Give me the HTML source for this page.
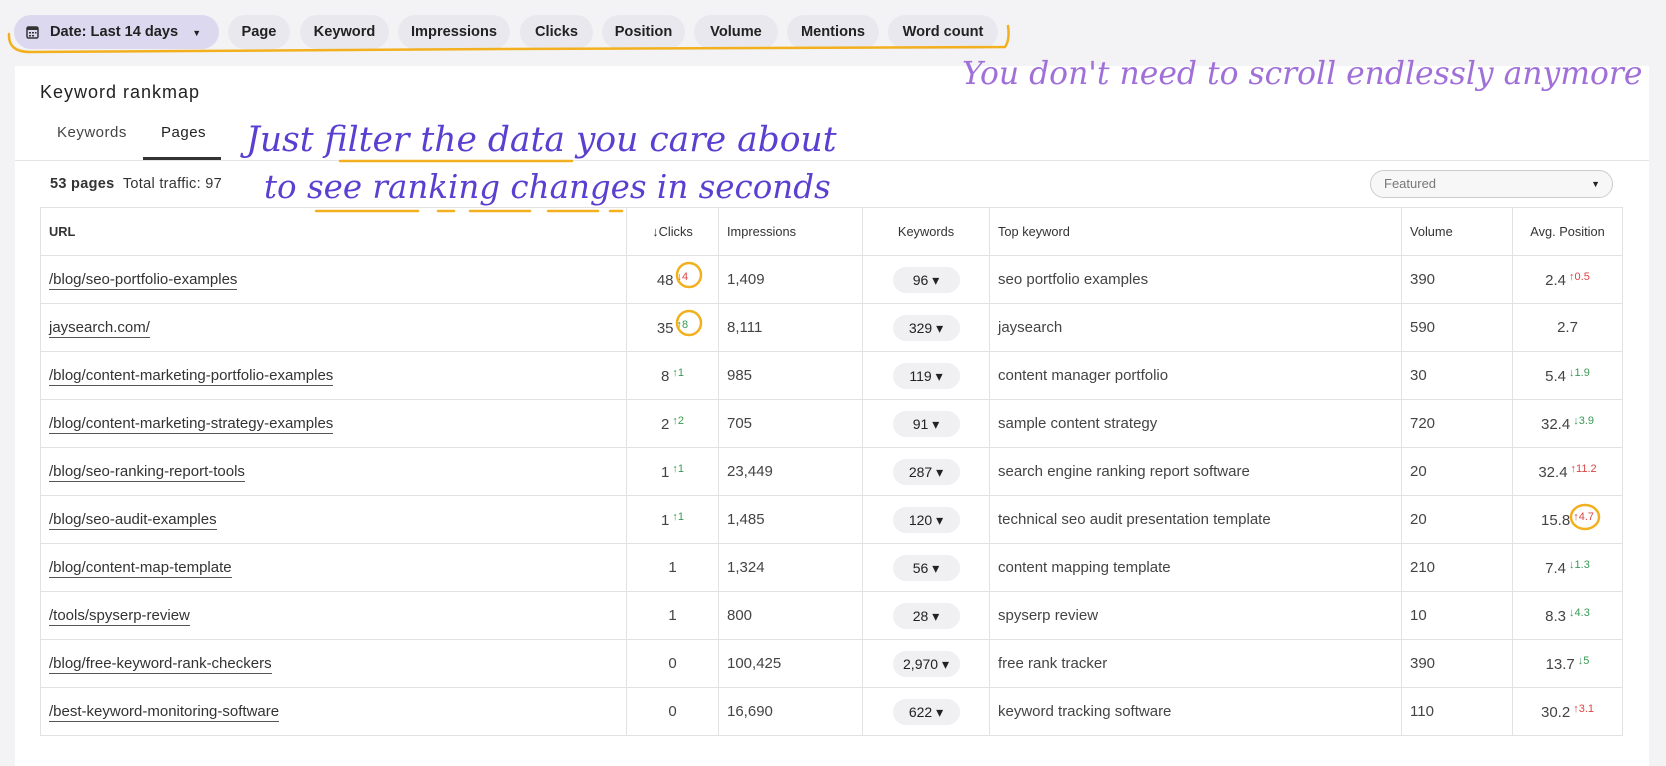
<!DOCTYPE html>
<html><head><meta charset="utf-8">
<style>
*{margin:0;padding:0;box-sizing:border-box}
body{width:1666px;height:756px;background:#f3f3f6;font-family:"Liberation Sans",sans-serif;color:#333;position:relative;overflow:hidden}
.chip{position:absolute;top:15px;height:34px;border-radius:17px;background:#e9e8ef;font-weight:bold;font-size:14.6px;line-height:34px;text-align:center;color:#222}
.card{position:absolute;left:15px;top:66px;width:1634px;height:700px;background:#fff}
.a{position:absolute;white-space:nowrap}
table{position:absolute;left:40px;top:207px;border-collapse:collapse;font-size:15px;color:#444}
td,th{border:1px solid #e2e2e2;height:48px;padding:0 8px;font-weight:normal}
th{height:48px;font-size:12.8px;color:#333}
td a{color:#333;text-decoration:none;border-bottom:1px solid #555;padding-bottom:1px}
.pill{display:inline-block;background:#f0f0f3;border-radius:13px;height:26px;line-height:26px;width:67px;text-align:center;color:#222;font-size:14px}
.up{color:#d44;font-size:11px;vertical-align:5px;margin-left:3px}
.dn{color:#3a9a55;font-size:11px;vertical-align:5px;margin-left:3px}
.hand{font-family:"DejaVu Serif",serif;font-style:italic;position:absolute;white-space:nowrap}
</style></head><body>
<div class="chip" style="left:14px;width:205px;background:#dcd8ef;text-align:left;padding-left:36px">Date: Last 14 days <span style="font-size:9px;margin-left:10px">▼</span>
<svg style="position:absolute;left:12px;top:10px" width="13" height="14" viewBox="0 0 13 14"><rect x="1" y="2" width="11" height="11" rx="1.5" fill="none" stroke="#333" stroke-width="1.5"/><rect x="1" y="2" width="11" height="3" fill="#333"/><g fill="#333"><rect x="3" y="7" width="2" height="1.5"/><rect x="6" y="7" width="2" height="1.5"/><rect x="9" y="7" width="1.5" height="1.5"/><rect x="3" y="10" width="2" height="1.5"/><rect x="6" y="10" width="2" height="1.5"/></g></svg></div>
<div class="chip" style="left:228px;width:62px">Page</div>
<div class="chip" style="left:300px;width:89px">Keyword</div>
<div class="chip" style="left:398px;width:112px">Impressions</div>
<div class="chip" style="left:520px;width:73px">Clicks</div>
<div class="chip" style="left:602px;width:83px">Position</div>
<div class="chip" style="left:694px;width:84px">Volume</div>
<div class="chip" style="left:787px;width:92px">Mentions</div>
<div class="chip" style="left:888px;width:110px">Word count</div>
<div class="card"></div>
<div class="a" style="left:40px;top:82px;font-size:18px;letter-spacing:1px;color:#222">Keyword rankmap</div>
<div class="a" style="left:57px;top:124px;font-size:15px;letter-spacing:.5px;color:#444">Keywords</div>
<div class="a" style="left:161px;top:124px;font-size:15px;letter-spacing:.5px;color:#222">Pages</div>
<div class="a" style="left:143px;top:157px;width:78px;height:3px;background:#333"></div>
<div class="a" style="left:15px;top:160px;width:1634px;height:1px;background:#e4e4e4"></div>
<div class="a" style="left:50px;top:176px;font-size:14.5px;letter-spacing:.3px;color:#333"><b>53 pages</b>&nbsp; Total traffic: 97</div>
<div class="a" style="left:1370px;top:170px;width:243px;height:28px;border:1px solid #ccc;border-radius:14px;background:#f7f7f8;font-size:13px;color:#777;line-height:26px;padding-left:13px">Featured<span style="position:absolute;right:12px;color:#222;font-size:9px">▼</span></div>
<table>
<tr><th style="width:586px;text-align:left;font-weight:bold">URL</th><th style="width:92px;text-align:center">↓Clicks</th><th style="width:144px;text-align:left">Impressions</th><th style="width:127px;text-align:center">Keywords</th><th style="width:412px;text-align:left">Top keyword</th><th style="width:111px;text-align:left">Volume</th><th style="width:110px;text-align:center">Avg. Position</th></tr>
<tr><td><a>/blog/seo-portfolio-examples</a></td><td style="text-align:center">48<span class="up">↓4</span></td><td>1,409</td><td style="text-align:center"><span class="pill">96 ▾</span></td><td>seo portfolio examples</td><td>390</td><td style="text-align:center">2.4<span class="up">↑0.5</span></td></tr>
<tr><td><a>jaysearch.com/</a></td><td style="text-align:center">35<span class="dn">↑8</span></td><td>8,111</td><td style="text-align:center"><span class="pill">329 ▾</span></td><td>jaysearch</td><td>590</td><td style="text-align:center">2.7</td></tr>
<tr><td><a>/blog/content-marketing-portfolio-examples</a></td><td style="text-align:center">8<span class="dn">↑1</span></td><td>985</td><td style="text-align:center"><span class="pill">119 ▾</span></td><td>content manager portfolio</td><td>30</td><td style="text-align:center">5.4<span class="dn">↓1.9</span></td></tr>
<tr><td><a>/blog/content-marketing-strategy-examples</a></td><td style="text-align:center">2<span class="dn">↑2</span></td><td>705</td><td style="text-align:center"><span class="pill">91 ▾</span></td><td>sample content strategy</td><td>720</td><td style="text-align:center">32.4<span class="dn">↓3.9</span></td></tr>
<tr><td><a>/blog/seo-ranking-report-tools</a></td><td style="text-align:center">1<span class="dn">↑1</span></td><td>23,449</td><td style="text-align:center"><span class="pill">287 ▾</span></td><td>search engine ranking report software</td><td>20</td><td style="text-align:center">32.4<span class="up">↑11.2</span></td></tr>
<tr><td><a>/blog/seo-audit-examples</a></td><td style="text-align:center">1<span class="dn">↑1</span></td><td>1,485</td><td style="text-align:center"><span class="pill">120 ▾</span></td><td>technical seo audit presentation template</td><td>20</td><td style="text-align:center">15.8<span class="up">↑4.7</span></td></tr>
<tr><td><a>/blog/content-map-template</a></td><td style="text-align:center">1</td><td>1,324</td><td style="text-align:center"><span class="pill">56 ▾</span></td><td>content mapping template</td><td>210</td><td style="text-align:center">7.4<span class="dn">↓1.3</span></td></tr>
<tr><td><a>/tools/spyserp-review</a></td><td style="text-align:center">1</td><td>800</td><td style="text-align:center"><span class="pill">28 ▾</span></td><td>spyserp review</td><td>10</td><td style="text-align:center">8.3<span class="dn">↓4.3</span></td></tr>
<tr><td><a>/blog/free-keyword-rank-checkers</a></td><td style="text-align:center">0</td><td>100,425</td><td style="text-align:center"><span class="pill">2,970 ▾</span></td><td>free rank tracker</td><td>390</td><td style="text-align:center">13.7<span class="dn">↓5</span></td></tr>
<tr><td><a>/best-keyword-monitoring-software</a></td><td style="text-align:center">0</td><td>16,690</td><td style="text-align:center"><span class="pill">622 ▾</span></td><td>keyword tracking software</td><td>110</td><td style="text-align:center">30.2<span class="up">↑3.1</span></td></tr>
</table>
<div class="hand" style="left:246px;top:120px;font-size:34.5px;color:#5a3fd0">Just filter the data you care about</div>
<div class="hand" style="left:264px;top:168px;font-size:32.5px;color:#5a3fd0">to see ranking changes in seconds</div>
<div class="hand" style="left:962px;top:56px;font-size:31.4px;color:#a070d8">You don't need to scroll endlessly anymore</div>
<svg class="a" style="left:0;top:0" width="1666" height="756">
<g fill="none" stroke="#f2b01e" stroke-width="2.5" stroke-linecap="round">
<path d="M9 34 Q8 52 30 52 L500 49 Q800 48 1005 47 Q1010 40 1008 26"/>
<path d="M340 161 L572 161"/>
<path d="M316 211 L418 211 M438 211 L454 211 M470 211 L530 211 M548 211 L598 211 M610 211 L622 211"/>
<ellipse cx="689" cy="275" rx="12" ry="12"/>
<ellipse cx="689" cy="323" rx="12" ry="12"/>
<ellipse cx="1585" cy="517" rx="14" ry="12"/>
</g></svg>
</body></html>
